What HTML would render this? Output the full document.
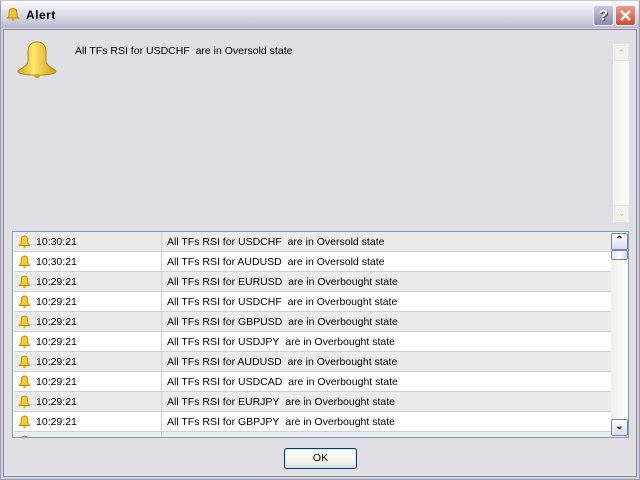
<!DOCTYPE html>
<html><head><style>
*{margin:0;padding:0;box-sizing:border-box}
body{width:640px;height:480px;overflow:hidden;background:#e0dfe3;font-family:"Liberation Sans",Tahoma,sans-serif;font-size:10.5px;color:#000;position:relative}
.abs{position:absolute}
#frame{left:0;top:0;width:640px;height:480px;border:1px solid #9a9ab0;border-top-color:#c8c8d8;background:#d4d3de}
#title{left:1px;top:1px;width:638px;height:27px;background:linear-gradient(#fdfdff,#e8e8f0 30%,#c6c5d8 85%,#b8b7cc)}
#client{left:3px;top:29px;width:634px;height:448px;background:#e0dfe3;border:1px solid #8888a0}
.tt{left:26px;top:8px;font-weight:bold;font-size:12px;letter-spacing:0.5px;color:#000}
.btn{top:5px;width:21px;height:21px;border-radius:3px;border:1px solid #fff}
.row{position:absolute;left:1px;width:597px;height:20px;border-bottom:1px solid #d0d0d0}
.row span{position:absolute;top:4px}
</style></head><body>
<div id="frame" class="abs"></div>
<div id="title" class="abs"></div>
<svg class="abs" style="left:6px;top:7px" width="14" height="15" viewBox="0 0 14 15"><path d="M7 1.5c-3 0-4 2.5-4 5v2.5L1.5 11h11L11 9V6.5c0-2.5-1-5-4-5z" fill="#f2c62c" stroke="#b08a10"/><circle cx="7" cy="12.8" r="1.3" fill="#d8a818"/></svg>
<div class="abs tt">Alert</div>
<div class="abs btn" style="left:593px;background:linear-gradient(#c8c8e0,#8a8ab0);border-color:#f4f4ff"><div style="color:#fff;font-weight:bold;font-size:15px;text-align:center;line-height:19px;text-shadow:1px 1px 0 #404060">?</div></div>
<div class="abs btn" style="left:615px;background:linear-gradient(#f09a8a,#d04a38);border-color:#fff"><svg width="19" height="19" viewBox="0 0 19 19"><path d="M5 5l9 9M14 5l-9 9" stroke="#fff" stroke-width="2.4"/></svg></div>
<div id="client" class="abs"></div>
<svg class="abs" style="left:16px;top:40px" width="42" height="40" viewBox="0 0 42 40"><defs><linearGradient id="g" x1="0" x2="1"><stop offset="0" stop-color="#d8a010"/><stop offset=".4" stop-color="#ffe870"/><stop offset="1" stop-color="#d09a10"/></linearGradient></defs><path d="M21 2c-7 0-9 5-9 10v9c0 4-6 7-10 10 0 3 9 4 19 4s19-1 19-4c-4-3-10-6-10-10v-9c0-5-2-10-9-10z" fill="url(#g)" stroke="#b08410"/><ellipse cx="21" cy="36" rx="3" ry="2" fill="#d8a818"/></svg>
<div class="abs" style="left:75px;top:45px">All TFs RSI for USDCHF&nbsp; are in Oversold state</div>
<div class="abs" style="left:613px;top:44px;width:16px;height:178px;background:linear-gradient(90deg,#f0f0ee,#fdfdfd)"></div>
<div class="abs" style="left:614px;top:45px;width:15px;height:16px;border:1px solid #e8e8e0;background:#f2f2ea;color:#c0c0b8;text-align:center;font-size:9px;line-height:14px">&#8963;</div>
<div class="abs" style="left:614px;top:205px;width:15px;height:16px;border:1px solid #e8e8e0;background:#f2f2ea;color:#c0c0b8;text-align:center;font-size:9px;line-height:14px">&#8964;</div>

<div class="abs" style="left:12px;top:231px;width:617px;height:207px;border:1px solid #7f9db9;background:#fff;overflow:hidden">
<div class="abs" style="left:148px;top:0;width:1px;height:207px;background:#d0d0d0;z-index:2"></div>
<div id="rows"></div>
<div class="abs" style="left:598px;top:0;width:17px;height:205px;background:linear-gradient(90deg,#f0f0ee,#fdfdfd)"></div>
<div class="abs" style="left:598px;top:1px;width:17px;height:17px;border:1px solid #7a84a8;border-radius:2px;background:linear-gradient(#fff,#d8dcf0);text-align:center;font-size:10px;line-height:14px;font-weight:bold">&#8963;</div>
<div class="abs" style="left:598px;top:18px;width:17px;height:10px;border:1px solid #7a84a8;border-radius:2px;background:linear-gradient(90deg,#e0e4f4,#fff,#d0d4ec)"></div>
<div class="abs" style="left:598px;top:187px;width:17px;height:17px;border:1px solid #7a84a8;border-radius:2px;background:linear-gradient(#fff,#d8dcf0);text-align:center;font-size:10px;line-height:14px;font-weight:bold">&#8964;</div>
</div>
<div class="abs" style="left:284px;top:448px;width:73px;height:21px;border:1px solid #003c74;border-radius:3px;background:linear-gradient(#fff,#f0f0ea 80%,#d6d0c5);box-shadow:inset 0 0 0 1px #cee7ff;text-align:center;line-height:19px">OK</div>
<script>
var d=[["10:30:21","USDCHF","Oversold"],["10:30:21","AUDUSD","Oversold"],["10:29:21","EURUSD","Overbought"],["10:29:21","USDCHF","Overbought"],["10:29:21","GBPUSD","Overbought"],["10:29:21","USDJPY","Overbought"],["10:29:21","AUDUSD","Overbought"],["10:29:21","USDCAD","Overbought"],["10:29:21","EURJPY","Overbought"],["10:29:21","GBPJPY","Overbought"],["","",""]];
var bell='<svg style="position:absolute;left:4px;top:3px" width="13" height="14" viewBox="0 0 13 14"><path d="M6.5 1c-2.6 0-3.3 2.2-3.3 4.5v2.5L1.2 10.5h10.6L9.8 8V5.5C9.8 3.2 9.1 1 6.5 1z" fill="#f4cc30" stroke="#b89010"/><circle cx="6.5" cy="12" r="1.2" fill="#d8a818"/></svg>';
var h='';d.forEach(function(r,i){h+='<div class="row" style="top:'+(i*20)+'px;background:'+(i%2?'#fff':'#ececec')+'">'+bell+(r[0]?'<span style="left:22px">'+r[0]+'</span><span style="left:153px">All TFs RSI for '+r[1]+'&nbsp; are in '+r[2]+' state</span>':'')+'</div>'});
document.getElementById('rows').innerHTML=h;
</script>
</body></html>
